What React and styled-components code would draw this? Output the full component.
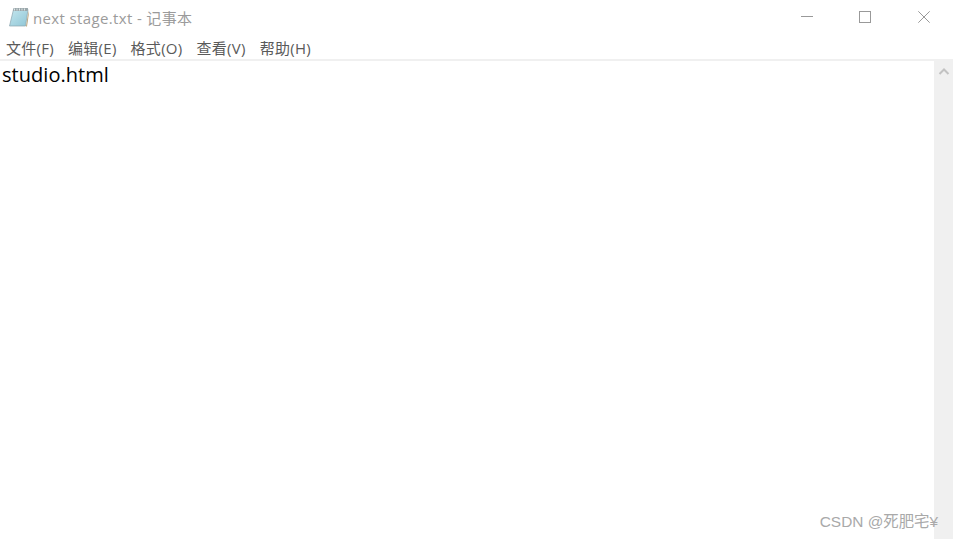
import React from "react";
import styled, { createGlobalStyle } from "styled-components";

const Global = createGlobalStyle`
  html, body { margin: 0; padding: 0; background: #fff; overflow: hidden; }
`;

const Win = styled.div`
  position: relative;
  width: 953px;
  height: 539px;
  display: flex;
  flex-direction: column;
  overflow: hidden;
`;

const TitleBar = styled.div`
  height: 37px;
  display: flex;
  align-items: flex-start;
  justify-content: space-between;
  padding-left: 9px;
`;

const TitleLeft = styled.div`
  display: flex;
  align-items: center;
  gap: 4px;
  height: 34px;
  font-family: "Open Sans", "Noto Sans CJK SC", sans-serif;
  font-size: 15px;
  letter-spacing: 0.36px;
  color: #9b9b9b;
`;

const Controls = styled.div`
  display: flex;
  gap: 1px;
`;

const ControlBtn = styled.div`
  width: 58px;
  height: 34px;
  display: flex;
  align-items: center;
  justify-content: center;
`;

const MenuBar = styled.div`
  height: 20px;
  padding: 0 0 2px 6px;
  display: flex;
  gap: 14px;
  align-items: center;
  border-bottom: 2px solid #f0f0f0;
  font-family: "Open Sans", "Noto Sans CJK SC", sans-serif;
  font-size: 15px;
  letter-spacing: 0.28px;
  color: #5a5a5a;
`;

const Body = styled.div`
  flex: 1;
  display: flex;
`;

const Editor = styled.div`
  flex: 1;
  padding: 1px 0 0 2px;
  font-family: "Open Sans", sans-serif;
  font-size: 20px;
  letter-spacing: 0.04px;
  line-height: 26px;
  color: #000;
`;

const Scrollbar = styled.div`
  width: 19px;
  background: #f0f0f0;
  display: flex;
  justify-content: center;
  padding-top: 6px;
  box-sizing: border-box;
`;

const Watermark = styled.div`
  position: absolute;
  right: 15px;
  bottom: 8px;
  font-family: "Liberation Sans", "Noto Sans CJK SC", sans-serif;
  font-size: 15.4px;
  color: #a9a9a9;
  white-space: nowrap;
`;

const NotepadIcon = () => (
  <svg width="20" height="20" viewBox="0 0 20 20">
    <defs>
      <linearGradient id="page" x1="0" y1="0" x2="1" y2="1">
        <stop offset="0" stopColor="#c4e6ee" />
        <stop offset="1" stopColor="#8fc6d6" />
      </linearGradient>
    </defs>
    <path d="M4.5 2.5 L19 2.5 L16.5 19 L0.5 19 Z" fill="url(#page)" stroke="#8aa4ae" strokeWidth="0.7" />
    <path d="M4.5 1 L19 1 L18.6 4 L4 4 Z" fill="#9aa7ab" />
    <path d="M5.5 1.5 V3.5 M8 1.5 V3.5 M10.5 1.5 V3.5 M13 1.5 V3.5 M15.5 1.5 V3.5" stroke="#e8eeee" strokeWidth="0.9" />
    <path d="M17 19.5 L19.5 3.5 L19.7 8 L18 19.5 Z" fill="#b7a27a" />
  </svg>
);

const Menus = ["文件(F)", "编辑(E)", "格式(O)", "查看(V)", "帮助(H)"];

export default function App() {
  return (
    <Win>
      <Global />
      <TitleBar>
        <TitleLeft>
          <NotepadIcon />
          <span>next stage.txt - 记事本</span>
        </TitleLeft>
        <Controls>
          <ControlBtn>
            <svg width="14" height="12" viewBox="0 0 14 12">
              <path d="M2 5.5 H14" stroke="#999" strokeWidth="1" />
            </svg>
          </ControlBtn>
          <ControlBtn>
            <svg width="12" height="12" viewBox="0 0 12 12">
              <rect x="0.5" y="0.5" width="11" height="11" fill="none" stroke="#999" strokeWidth="1" />
            </svg>
          </ControlBtn>
          <ControlBtn>
            <svg width="12" height="12" viewBox="0 0 12 12">
              <path d="M0.3 0.3 L11.7 11.7 M11.7 0.3 L0.3 11.7" stroke="#999" strokeWidth="1" />
            </svg>
          </ControlBtn>
        </Controls>
      </TitleBar>
      <MenuBar>
        {Menus.map((m) => (
          <span key={m}>{m}</span>
        ))}
      </MenuBar>
      <Body>
        <Editor>studio.html</Editor>
        <Scrollbar>
          <svg width="12" height="9" viewBox="0 0 12 9">
            <path d="M1.5 7 L6 2.5 L10.5 7" fill="none" stroke="#c2c2c2" strokeWidth="2" />
          </svg>
        </Scrollbar>
      </Body>
      <Watermark>CSDN @死肥宅¥</Watermark>
    </Win>
  );
}
